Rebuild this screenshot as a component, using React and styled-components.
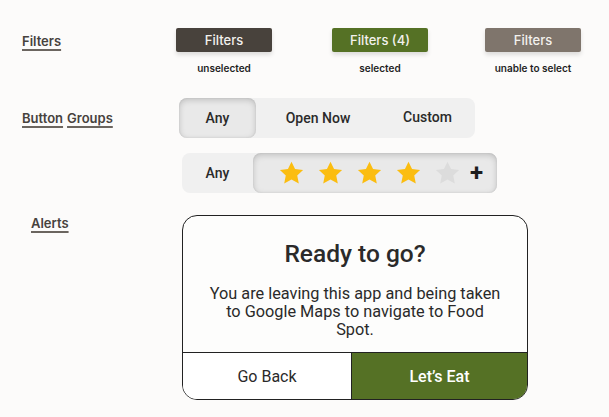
import styled, { createGlobalStyle } from "styled-components";

const Global = createGlobalStyle`
  html, body {
    margin: 0;
    padding: 0;
    background: #fcfbfa;
  }
  body {
    font-family: Inter, "Noto Sans", sans-serif;
    color: #2b2b2b;
  }
`;

const Page = styled.div`
  width: 609px;
  height: 417px;
  overflow: hidden;
  display: flex;
  flex-direction: column;
`;

const Row = styled.div`
  display: flex;
  align-items: ${({ $align }) => $align || "flex-start"};
  margin-top: ${({ $top }) => $top}px;
`;

const Label = styled.div`
  width: ${({ $w }) => $w || 176}px;
  padding-left: ${({ $left }) => $left || 22}px;
  padding-top: ${({ $pt }) => $pt || 0}px;
  box-sizing: border-box;
  flex-shrink: 0;
  font-size: 13px;
  font-weight: 600;
  color: #47423d;

  span {
    text-decoration: underline;
    text-decoration-thickness: 1.5px;
    text-underline-offset: 3px;
    text-decoration-color: #6b655f;
    margin-right: 4px;
  }
`;

const FilterCols = styled.div`
  display: flex;
`;

const FilterCol = styled.div`
  width: 96px;
  margin-right: ${({ $gap }) => $gap || 0}px;
  display: flex;
  flex-direction: column;
  align-items: center;
`;

const FilterButton = styled.div`
  width: 96px;
  height: 24px;
  border-radius: 2px;
  background: ${({ $bg }) => $bg};
  color: #f3f1ee;
  font-size: 13px;
  font-weight: 500;
  display: flex;
  align-items: center;
  justify-content: center;
  box-shadow: 0 3px 4px rgba(0, 0, 0, 0.12);
`;

const Caption = styled.div`
  margin-top: 10px;
  font-size: 10px;
  font-weight: 600;
  white-space: nowrap;
  color: #1f1f1f;
`;

const Group = styled.div`
  height: 40px;
  display: flex;
  align-items: stretch;
  background: #f0f0f0;
  border-radius: 8px;
  font-family: Roboto, "Noto Sans", sans-serif;
  font-size: 14px;
  font-weight: 500;
  color: #2a2a2a;
`;

const Segment = styled.div`
  width: ${({ $w }) => $w}px;
  display: flex;
  align-items: center;
  justify-content: center;
  padding-bottom: ${({ $pb }) => $pb || 0}px;
  border-radius: 8px;
  ${({ $active }) =>
    $active &&
    `
    background: #e9e9e9;
    box-shadow: inset 0 2px 6px rgba(0,0,0,0.18), inset 0 0 2px rgba(0,0,0,0.1);
  `}
`;

const Stars = styled(Segment)`
  justify-content: flex-start;
  padding-left: 26px;
  gap: 14px;
  box-sizing: border-box;
`;

const Plus = styled.div`
  font-size: 24px;
  font-weight: 700;
  color: #1d1d1d;
  margin-left: -4px;
  line-height: 1;
`;

const Dialog = styled.div`
  width: 346px;
  height: 185px;
  box-sizing: border-box;
  border: 1px solid #222;
  border-radius: 15px;
  overflow: hidden;
  display: flex;
  flex-direction: column;
  background: #fdfdfc;
  font-family: Roboto, "Noto Sans", sans-serif;
`;

const DialogBody = styled.div`
  flex: 1;
  display: flex;
  flex-direction: column;
  align-items: center;
  padding: 23px 0 0;
`;

const Title = styled.div`
  font-size: 24.5px;
  font-weight: 500;
  color: #2a2a2a;
`;

const Message = styled.div`
  margin-top: 17px;
  max-width: 294px;
  font-size: 16.3px;
  line-height: 18px;
  text-align: center;
  color: #2a2a2a;
`;

const Actions = styled.div`
  height: 46px;
  display: flex;
  border-top: 1.5px solid #222;
`;

const Action = styled.div`
  flex: ${({ $primary }) => ($primary ? "1" : "0 0 168px")};
  display: flex;
  align-items: center;
  justify-content: center;
  font-size: 16px;
  font-weight: ${({ $primary }) => ($primary ? 500 : 400)};
  background: ${({ $primary }) => ($primary ? "#557125" : "#fff")};
  color: ${({ $primary }) => ($primary ? "#fff" : "#2a2a2a")};
  & + & {
    border-left: 1.5px solid #222;
  }
`;

function Star({ color }) {
  return (
    <svg width="25" height="24" viewBox="0 0 24 23">
      <path
        d="M12 0.6l3.4 7 7.7 1-5.6 5.3 1.5 7.6L12 17.8l-7 3.7 1.5-7.6L0.9 8.6l7.7-1z"
        fill={color}
      />
    </svg>
  );
}

export default function App() {
  return (
    <Page>
      <Global />
      <Row $top={28}>
        <Label $pt={5}>
          <span>Filters</span>
        </Label>
        <FilterCols>
          <FilterCol $gap={60}>
            <FilterButton $bg="#48423c">Filters</FilterButton>
            <Caption>unselected</Caption>
          </FilterCol>
          <FilterCol $gap={57}>
            <FilterButton $bg="#557125">Filters (4)</FilterButton>
            <Caption>selected</Caption>
          </FilterCol>
          <FilterCol>
            <FilterButton $bg="#7f756c">Filters</FilterButton>
            <Caption>unable to select</Caption>
          </FilterCol>
        </FilterCols>
      </Row>

      <Row $top={24} $align="center">
        <Label $w={179}>
          <span>Button</span>
          <span>Groups</span>
        </Label>
        <Group>
          <Segment $w={77} $active>
            Any
          </Segment>
          <Segment $w={124}>Open Now</Segment>
          <Segment $w={95} $pb={3}>
            Custom
          </Segment>
        </Group>
      </Row>

      <Row $top={15}>
        <Label $w={182} />
        <Group>
          <Segment $w={71}>Any</Segment>
          <Stars $w={244} $active>
            <Star color="#fbbd10" />
            <Star color="#fbbd10" />
            <Star color="#fbbd10" />
            <Star color="#fbbd10" />
            <Star color="#dcdcdc" />
            <Plus>+</Plus>
          </Stars>
        </Group>
      </Row>

      <Row $top={22}>
        <Label $w={182} $left={31}>
          <span>Alerts</span>
        </Label>
        <Dialog>
          <DialogBody>
            <Title>Ready to go?</Title>
            <Message>
              You are leaving this app and being taken to Google Maps to
              navigate to Food Spot.
            </Message>
          </DialogBody>
          <Actions>
            <Action>Go Back</Action>
            <Action $primary>Let’s Eat</Action>
          </Actions>
        </Dialog>
      </Row>
    </Page>
  );
}
